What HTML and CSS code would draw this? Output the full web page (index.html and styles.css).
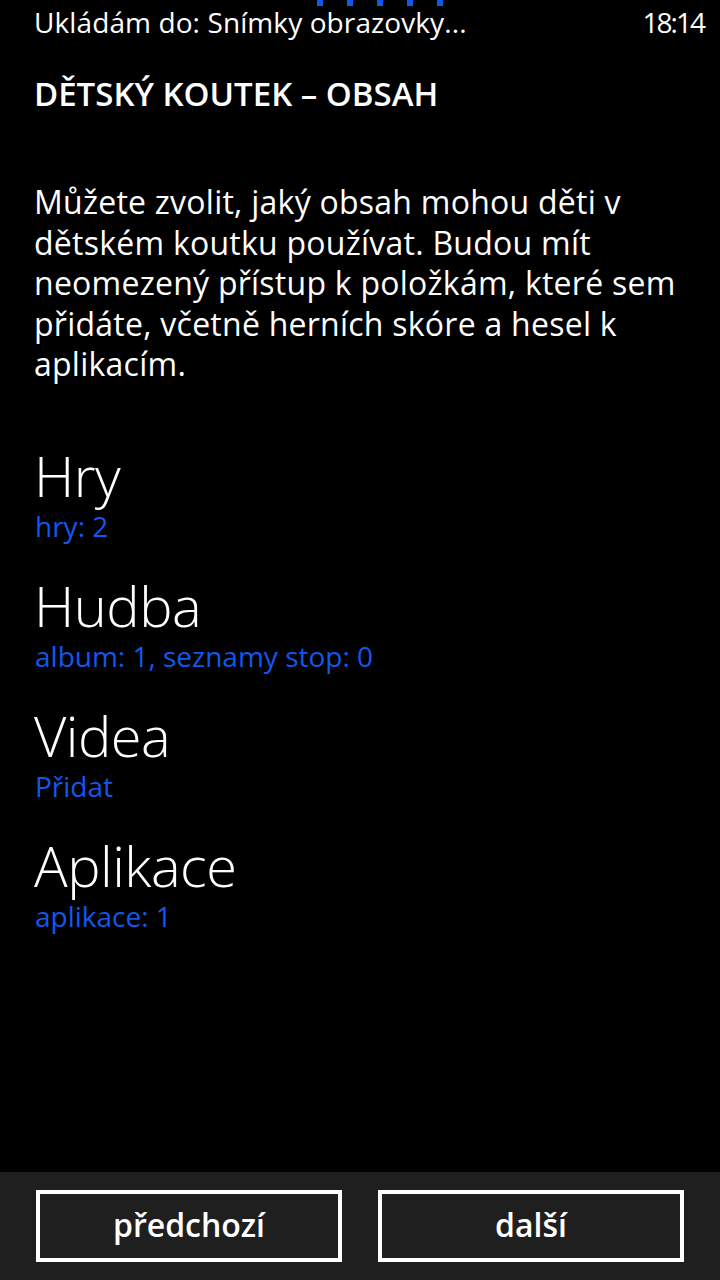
FILE: index.html
```html
<!DOCTYPE html>
<html lang="cs">
<head>
    <meta charset="UTF-8">
    <meta name="viewport" content="width=device-width, initial-scale=1.0">
    <title>Dětský koutek – obsah</title>
    <link rel="stylesheet" href="styles.css">
</head>
<body>
    <div class="phone">
        <div class="status">
            <div class="progress">
                <span></span><span></span><span></span><span></span><span></span>
            </div>
            <span class="status-text">Ukládám do: Snímky obrazovky...</span>
            <span class="clock">18:14</span>
        </div>

        <h1 class="title">DĚTSKÝ KOUTEK – OBSAH</h1>

        <p class="intro">Můžete zvolit, jaký obsah mohou děti v dětském koutku používat. Budou mít neomezený přístup k položkám, které sem přidáte, včetně herních skóre a hesel k aplikacím.</p>

        <ul class="items">
            <li>
                <div class="item-name">Hry</div>
                <div class="item-info">hry: 2</div>
            </li>
            <li>
                <div class="item-name">Hudba</div>
                <div class="item-info">album: 1, seznamy stop: 0</div>
            </li>
            <li>
                <div class="item-name">Videa</div>
                <div class="item-info">Přidat</div>
            </li>
            <li>
                <div class="item-name">Aplikace</div>
                <div class="item-info">aplikace: 1</div>
            </li>
        </ul>

        <div class="appbar">
            <button class="btn">předchozí</button>
            <button class="btn">další</button>
        </div>
    </div>
</body>
</html>
```

FILE: styles.css
```css
body {
    margin: 0;
    background-color: #000;
    color: #fff;
    font-family: "Open Sans", "Noto Sans", sans-serif;
}

.phone {
    width: 720px;
    height: 1280px;
    display: flex;
    flex-direction: column;
    position: relative;
    overflow: hidden;
}

/* horní lišta */
.status {
    height: 44px;
    box-sizing: border-box;
    display: flex;
    justify-content: space-between;
    align-items: flex-start;
    padding: 8px 16px 0 34px;
    font-size: 28px;
    letter-spacing: 0.1px;
    line-height: 28px;
}

.clock {
    letter-spacing: -2px;
}

.progress {
    position: absolute;
    top: 0;
    left: 317px;
    display: flex;
    gap: 24px;
}

.progress span {
    width: 6px;
    height: 6px;
    background-color: #1058ee;
}

.title {
    margin: 30px 0 0 34px;
    font-size: 33px;
    font-weight: 600;
    line-height: 40px;
}

.intro {
    margin: 68px 20px 0 34px;
    font-size: 32px;
    line-height: 40.5px;
    letter-spacing: 0.25px;
}

.items {
    list-style: none;
    margin: 55px 0 0 0;
    padding: 0;
    flex: 1;
}

.items li {
    padding-left: 34px;
    margin-bottom: 28px;
}

.item-name {
    font-size: 56px;
    font-weight: 300;
    line-height: 70px;
    letter-spacing: -0.5px;
}

.item-info {
    color: #1058ee;
    font-size: 28px;
    line-height: 32px;
    padding-left: 1px;
}

/* spodní lišta s tlačítky */
.appbar {
    height: 108px;
    background-color: #1f1f1f;
    display: flex;
    gap: 36px;
    padding: 18px 36px 0 36px;
    box-sizing: border-box;
}

.btn {
    width: 306px;
    height: 72px;
    background-color: #1f1f1f;
    color: #fff;
    border: 4px solid #fff;
    font-family: inherit;
    font-size: 32px;
    font-weight: 600;
    padding: 0 0 4px 0;
}
```
